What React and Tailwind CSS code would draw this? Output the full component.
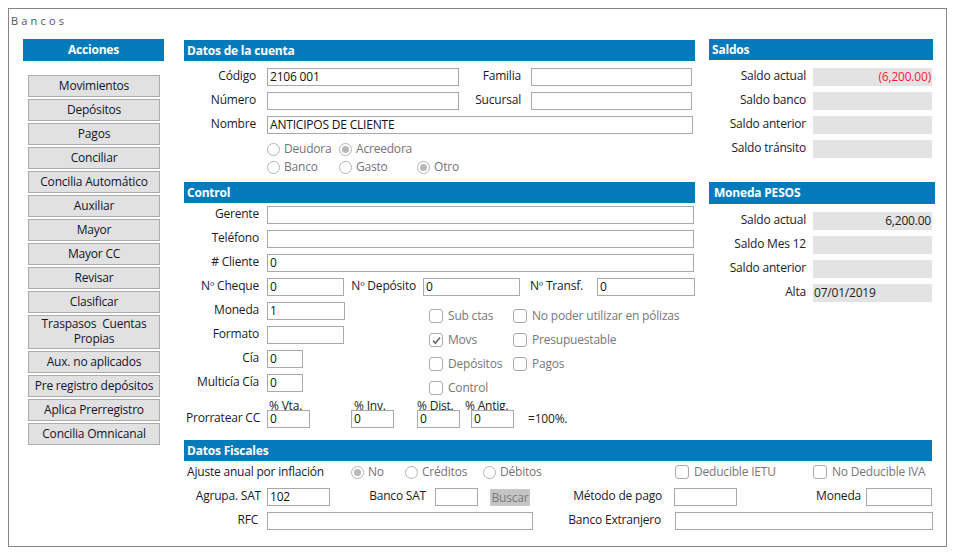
import React from 'react';

const acciones = [
  'Movimientos', 'Depósitos', 'Pagos', 'Conciliar', 'Concilia Automático', 'Auxiliar', 'Mayor', 'Mayor CC',
  'Revisar', 'Clasificar', 'Traspasos  Cuentas Propias', 'Aux. no aplicados', 'Pre registro depósitos',
  'Aplica Prerregistro', 'Concilia Omnicanal',
];

function Header({ children, className = '' }) {
  return <div className={`bg-[#037bbb] text-white font-bold text-[12px] leading-[21px] h-[21px] pl-[3px] ${className}`}>{children}</div>;
}

function Input({ value = '', className = '' }) {
  return (
    <div className={`relative h-[18px] shrink-0 border border-[#a9a9a9] bg-white pl-[2px] text-[12px] leading-[15px] text-[#111] ${className}`}>
      {value}
    </div>
  );
}

function Label({ children, className = '' }) {
  return <span className={`shrink-0 pb-[2px] text-right text-[12px] leading-[16px] text-[#1a1a2a] whitespace-nowrap ${className}`}>{children}</span>;
}

function Radio({ label, checked, className = '' }) {
  return (
    <span className={`flex items-center gap-[4px] text-[12px] leading-[16px] text-[#77727a] ${className}`}>
      <span className="flex h-[13px] w-[13px] items-center justify-center rounded-full border border-[#b4b4b4] bg-white">
        {checked && <span className="h-[7px] w-[7px] rounded-full bg-[#b8b8b8]" />}
      </span>
      {label}
    </span>
  );
}

function Check({ label, checked, className = '' }) {
  return (
    <span className={`flex items-center gap-[5px] text-[12px] leading-[16px] text-[#77777a] whitespace-nowrap ${className}`}>
      <span className="flex h-[14px] w-[14px] items-center justify-center rounded-[3px] border border-[#ababab] bg-white">
        {checked && (
          <svg viewBox="0 0 12 12" className="h-[11px] w-[11px]" fill="none" stroke="#6e6e6e" strokeWidth="1.8">
            <path d="M2.2 6.2 L4.8 9 L9.8 2.8" />
          </svg>
        )}
      </span>
      {label}
    </span>
  );
}

function Saldo({ label, value, red }) {
  return (
    <div className="flex h-[18px] items-center">
      <span className="w-[104px] shrink-0 pb-[2px] pr-[7px] text-right text-[12px] leading-[16px] text-[#1a1a2a]">{label}</span>
      <div className={`h-[18px] w-[119px] bg-[#e3e3e3] pr-[1px] text-right text-[12px] leading-[17px] ${red ? 'text-[#fb1a3c]' : 'text-[#222]'}`}>
        {value}
      </div>
    </div>
  );
}

function Percent({ label, className = '', labelClass = '' }) {
  return (
    <div className={`flex flex-col ${className}`}>
      <span className={`h-[10px] whitespace-nowrap text-[12px] leading-[12px] text-[#222] ${labelClass}`}>{label}</span>
      <Input value="0" className="w-[43px]" />
    </div>
  );
}

export default function App() {
  return (
    <div className="h-[555px] w-[954px] bg-white p-2 font-['Open_Sans','Noto_Sans',sans-serif] tracking-[-0.2px]">
      <div className="h-[539px] w-[939px] border border-[#858585]">
        <div className="pl-[2px] pt-[5px] text-[11px] leading-[14px] tracking-[3.2px] text-[#555]">Bancos</div>

        <div className="flex pl-[14px] pt-[11px]">
          {/* Acciones */}
          <div className="w-[141px] shrink-0">
            <div className="h-[22px] bg-[#037bbb] text-center text-[12px] font-bold leading-[21px] text-white">Acciones</div>
            <div className="mt-[14px] ml-[5px] flex w-[132px] flex-col gap-[2px]">
              {acciones.map((a) => (
                <div
                  key={a}
                  className="flex min-h-[22px] items-center justify-center whitespace-pre-wrap border border-[#ababab] bg-[#e1e1e1] px-1 pb-[2px] text-center text-[12px] leading-[15px] text-[#14142a]"
                >
                  {a}
                </div>
              ))}
            </div>
          </div>

          <div className="ml-[20px] w-[750px]">
            <div className="flex">
              {/* Datos de la cuenta + Control */}
              <div className="w-[511px] shrink-0 pt-[1px]">
                <Header>Datos de la cuenta</Header>
                <div className="mt-[7px] flex flex-col gap-[6px]">
                  <div className="flex items-center">
                    <Label className="w-[72px]">Código</Label>
                    <Input value="2106 001" className="ml-[11px] w-[192px]" />
                    <Label className="w-[62px]">Familia</Label>
                    <Input className="ml-[10px] w-[161px]" />
                  </div>
                  <div className="flex items-center">
                    <Label className="w-[72px]">Número</Label>
                    <Input className="ml-[11px] w-[192px]" />
                    <Label className="w-[62px]">Sucursal</Label>
                    <Input className="ml-[10px] w-[161px]" />
                  </div>
                  <div className="flex items-center">
                    <Label className="w-[72px]">Nombre</Label>
                    <Input value="ANTICIPOS DE CLIENTE" className="ml-[11px] w-[426px]" />
                  </div>
                </div>
                <div className="ml-[83px] mt-[7px] flex flex-col gap-[2px]">
                  <div className="flex">
                    <Radio label="Deudora" className="w-[72px]" />
                    <Radio label="Acreedora" checked />
                  </div>
                  <div className="flex">
                    <Radio label="Banco" className="w-[72px]" />
                    <Radio label="Gasto" className="w-[78px]" />
                    <Radio label="Otro" checked />
                  </div>
                </div>

                <Header className="mt-[7px]">Control</Header>
                <div className="mt-[3px] flex flex-col gap-[6px]">
                  <div className="flex items-center">
                    <Label className="w-[75px]">Gerente</Label>
                    <Input className="ml-[8px] w-[427px]" />
                  </div>
                  <div className="flex items-center">
                    <Label className="w-[75px]">Teléfono</Label>
                    <Input className="ml-[8px] w-[427px]" />
                  </div>
                  <div className="flex items-center">
                    <Label className="w-[75px]"># Cliente</Label>
                    <Input value="0" className="ml-[8px] w-[427px]" />
                  </div>
                  <div className="flex items-center">
                    <Label className="w-[75px]">Nº Cheque</Label>
                    <Input value="0" className="ml-[8px] w-[77px]" />
                    <Label className="w-[72px]">Nº Depósito</Label>
                    <Input value="0" className="ml-[7px] w-[97px]" />
                    <Label className="w-[63px]">Nº Transf.</Label>
                    <Input value="0" className="ml-[14px] w-[98px]" />
                  </div>
                </div>

                <div className="mt-[6px] flex">
                  <div className="flex w-[245px] shrink-0 flex-col gap-[6px]">
                    <div className="flex items-center">
                      <Label className="w-[75px]">Moneda</Label>
                      <Input value="1" className="ml-[8px] w-[78px]" />
                    </div>
                    <div className="flex items-center">
                      <Label className="w-[75px]">Formato</Label>
                      <Input className="ml-[8px] w-[77px]" />
                    </div>
                    <div className="flex items-center">
                      <Label className="w-[75px]">Cía</Label>
                      <Input value="0" className="ml-[8px] w-[36px]" />
                    </div>
                    <div className="flex items-center">
                      <Label className="w-[75px]">Multicía Cía</Label>
                      <Input value="0" className="ml-[8px] w-[36px]" />
                    </div>
                  </div>
                  <div className="grid grid-cols-[84px_1fr] content-start gap-y-[8px] pt-[6px]">
                    <Check label="Sub ctas" />
                    <Check label="No poder utilizar en pólizas" />
                    <Check label="Movs" checked />
                    <Check label="Presupuestable" />
                    <Check label="Depósitos" />
                    <Check label="Pagos" />
                    <Check label="Control" />
                  </div>
                </div>

                <div className="mt-[4px] flex h-[28px] items-end">
                  <Label className="w-[76px]">Prorratear CC</Label>
                  <Percent label="% Vta." className="ml-[7px]" labelClass="ml-[2px]" />
                  <Percent label="% Inv." className="ml-[41px]" labelClass="ml-[3px]" />
                  <Percent label="% Dist." className="ml-[23px]" />
                  <Percent label="% Antig." className="ml-[11px]" labelClass="-ml-[6px]" />
                  <span className="ml-[14px] text-[12px] leading-[18px] text-[#222]">=100%.</span>
                </div>
              </div>

              {/* Saldos */}
              <div className="ml-[14px] w-[226px] shrink-0">
                <Header className="w-[224px]">Saldos</Header>
                <div className="mt-[8px] flex flex-col gap-[6px]">
                  <Saldo label="Saldo actual" value="(6,200.00)" red />
                  <Saldo label="Saldo banco" />
                  <Saldo label="Saldo anterior" />
                  <Saldo label="Saldo tránsito" />
                </div>
                <Header className="mt-[24px] h-[22px] pl-[5px] leading-[22px]">Moneda PESOS</Header>
                <div className="mt-[8px] flex flex-col gap-[6px]">
                  <Saldo label="Saldo actual" value="6,200.00" />
                  <Saldo label="Saldo Mes 12" />
                  <Saldo label="Saldo anterior" />
                  <Saldo label="Alta" value={<span className="block pl-[1px] text-left">07/01/2019</span>} />
                </div>
              </div>
            </div>

            {/* Datos Fiscales */}
            <div className="mt-[12px] w-[748px]">
              <Header>Datos Fiscales</Header>
              <div className="mt-[2px] flex h-[18px] items-center">
                <span className="ml-[3px] w-[164px] shrink-0 whitespace-nowrap text-[12px] leading-[18px] text-[#1a1a2a]">Ajuste anual por inflación</span>
                <Radio label="No" checked className="w-[54px]" />
                <Radio label="Créditos" className="w-[78px]" />
                <Radio label="Débitos" className="w-[192px]" />
                <Check label="Deducible IETU" className="w-[138px]" />
                <Check label="No Deducible IVA" />
              </div>
              <div className="mt-[7px] flex items-center">
                <Label className="w-[77px]">Agrupa. SAT</Label>
                <Input value="102" className="ml-[6px] w-[63px]" />
                <Label className="w-[96px]">Banco SAT</Label>
                <Input className="ml-[9px] w-[43px]" />
                <span className="ml-[12px] h-[17px] w-[41px] border border-[#c8c8c8] bg-[#c4c4c4] text-center text-[12px] leading-[15px] text-[#7a7a7a]">Buscar</span>
                <Label className="w-[132px]">Método de pago</Label>
                <Input className="ml-[12px] w-[63px]" />
                <Label className="w-[124px]">Moneda</Label>
                <Input className="ml-[5px] w-[66px]" />
              </div>
              <div className="mt-[6px] flex items-center">
                <Label className="w-[74px]">RFC</Label>
                <Input className="ml-[9px] w-[266px]" />
                <Label className="w-[128px]">Banco Extranjero</Label>
                <Input className="ml-[14px] w-[258px]" />
              </div>
            </div>
          </div>
        </div>
      </div>
    </div>
  );
}
